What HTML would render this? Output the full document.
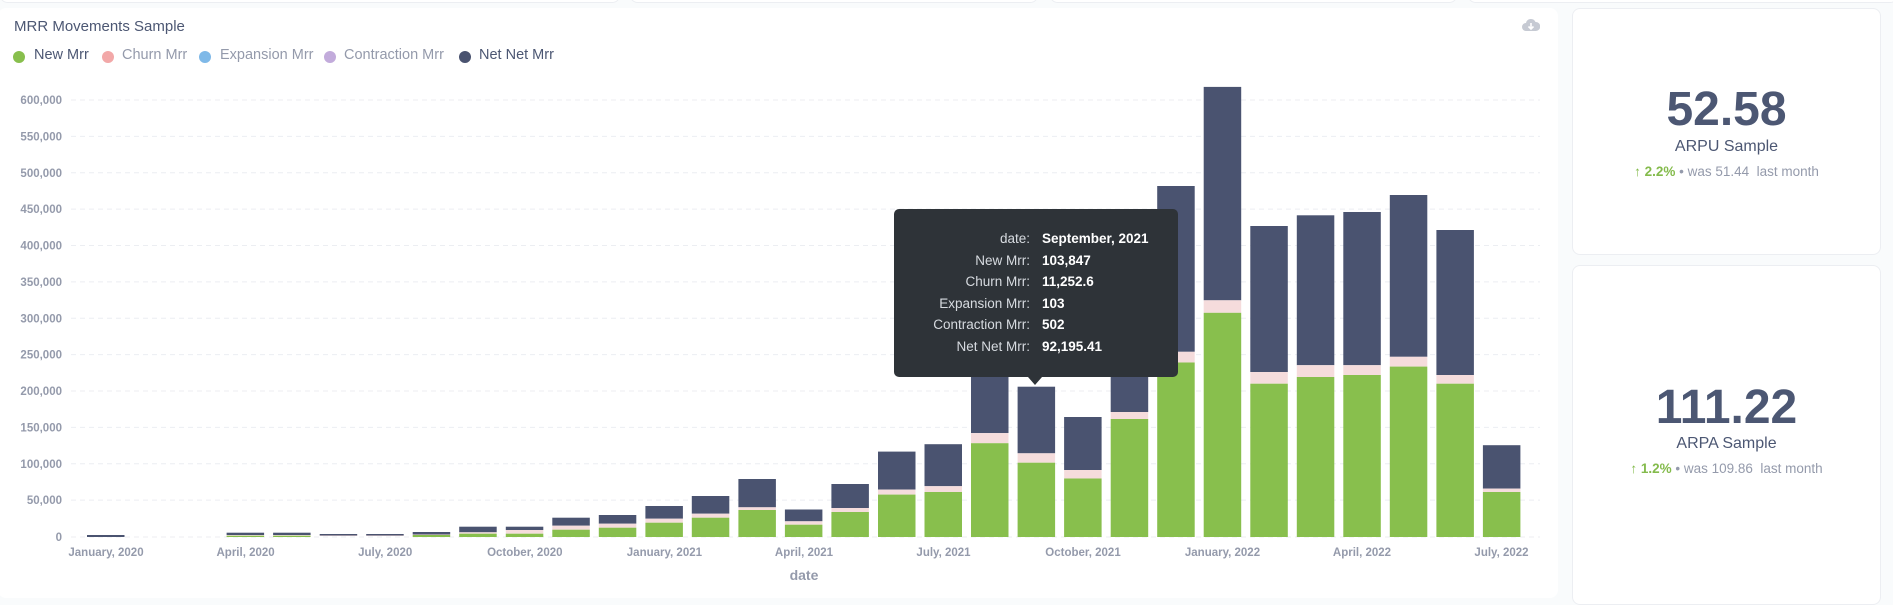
<!DOCTYPE html>
<html><head><meta charset="utf-8"><style>
body{margin:0;width:1893px;height:587px;overflow:hidden;background:#f9fbfc;font-family:"Liberation Sans",sans-serif;position:relative}
.card{position:absolute;background:#fff;border:1px solid #eceef2;border-radius:8px;box-sizing:border-box}
.t{position:absolute;white-space:nowrap}
.tip{position:absolute;left:894px;top:209px;width:284px;height:168px;background:#2e3338;border-radius:5px;color:#fff;font-size:13.5px}
.tip .r{position:absolute;left:0;width:284px;height:20px}
.tip .l{position:absolute;right:148px;color:#d7dbe0;text-align:right}
.tip .v{position:absolute;left:148px;font-weight:bold}
.big{font-weight:bold;color:#4c5773;font-size:48px;text-align:center;width:309px;left:1572px}
.sub{color:#4c5773;font-size:16px;text-align:center;width:309px;left:1572px}
.dl{font-size:13.5px;color:#949aab;text-align:center;width:309px;left:1572px}
.dl b{color:#84bb4c}
</style></head><body>
<div class="card" style="left:0;top:-12px;width:620px;height:15px"></div>
<div class="card" style="left:630px;top:-12px;width:408px;height:15px"></div>
<div class="card" style="left:1050px;top:-12px;width:407px;height:15px"></div>
<div class="card" style="left:1468px;top:-12px;width:430px;height:15px"></div>
<div class="card" style="left:-2px;top:8px;width:1560px;height:590px;border:none"></div>
<div class="card" style="left:1572px;top:8px;width:309px;height:247px"></div>
<div class="card" style="left:1572px;top:265px;width:309px;height:340px"></div>

<div class="t" style="left:14px;top:18px;font-size:15px;color:#4c5773">MRR Movements Sample</div>
<div class="t" style="left:0;top:47px;font-size:14.5px;height:20px;width:600px">
<span class="t" style="left:13px;top:4px;width:12px;height:12px;border-radius:50%;background:#88bf4d"></span><span class="t" style="left:34px;top:0;color:#4c5773">New Mrr</span>
<span class="t" style="left:102px;top:4px;width:12px;height:12px;border-radius:50%;background:#f2a8a8"></span><span class="t" style="left:122px;top:0;color:#949aab">Churn Mrr</span>
<span class="t" style="left:199px;top:4px;width:12px;height:12px;border-radius:50%;background:#7fb9e8"></span><span class="t" style="left:220px;top:0;color:#949aab">Expansion Mrr</span>
<span class="t" style="left:324px;top:4px;width:12px;height:12px;border-radius:50%;background:#c2abdb"></span><span class="t" style="left:344px;top:0;color:#949aab">Contraction Mrr</span>
<span class="t" style="left:459px;top:4px;width:12px;height:12px;border-radius:50%;background:#4a5370"></span><span class="t" style="left:479px;top:0;color:#4c5773">Net Net Mrr</span>
</div>
<svg style="position:absolute;left:1522px;top:18px" width="18" height="16" viewBox="0 0 18 16"><path d="M4 13a4 4 0 0 1 0-8 5 5 0 0 1 9.5-1A4 4 0 0 1 14 13z" fill="#c6cad3"/><path d="M9 5v6M6.5 8.5 9 11l2.5-2.5" stroke="#fff" stroke-width="1.6" fill="none"/></svg>

<svg style="position:absolute;left:0;top:0" width="1560" height="587" font-family="Liberation Sans" font-size="11.5" font-weight="bold" fill="#949aab">
<g stroke="#eceef2" stroke-dasharray="5 4">
<line x1="71" x2="1540" y1="100" y2="100"/><line x1="71" x2="1540" y1="136.4" y2="136.4"/><line x1="71" x2="1540" y1="172.8" y2="172.8"/><line x1="71" x2="1540" y1="209.1" y2="209.1"/><line x1="71" x2="1540" y1="245.5" y2="245.5"/><line x1="71" x2="1540" y1="281.9" y2="281.9"/><line x1="71" x2="1540" y1="318.3" y2="318.3"/><line x1="71" x2="1540" y1="354.6" y2="354.6"/><line x1="71" x2="1540" y1="391" y2="391"/><line x1="71" x2="1540" y1="427.4" y2="427.4"/><line x1="71" x2="1540" y1="463.8" y2="463.8"/><line x1="71" x2="1540" y1="500.1" y2="500.1"/><line x1="71" x2="1540" y1="537" y2="537"/>
</g>
<g text-anchor="end">
<text x="62" y="104">600,000</text><text x="62" y="140.4">550,000</text><text x="62" y="176.8">500,000</text><text x="62" y="213.1">450,000</text><text x="62" y="249.5">400,000</text><text x="62" y="285.9">350,000</text><text x="62" y="322.3">300,000</text><text x="62" y="358.6">250,000</text><text x="62" y="395">200,000</text><text x="62" y="431.4">150,000</text><text x="62" y="467.8">100,000</text><text x="62" y="504.1">50,000</text><text x="62" y="541">0</text>
</g>
<g id="bars">
<rect x="87" y="535" width="37.5" height="2" fill="#4a5370"/>
<g fill="#4a5370">
<rect x="226.6" y="532.7" width="37.5" height="2.3"/><rect x="273.1" y="532.7" width="37.5" height="2.3"/><rect x="319.7" y="534" width="37.5" height="1.5"/><rect x="366.2" y="534" width="37.5" height="1.5"/><rect x="412.7" y="532" width="37.5" height="2.5"/><rect x="459.2" y="526.7" width="37.5" height="5.6"/><rect x="505.8" y="526.7" width="37.5" height="3.3"/><rect x="552.3" y="517.7" width="37.5" height="8"/><rect x="598.8" y="515" width="37.5" height="8.7"/><rect x="645.4" y="506" width="37.5" height="12.7"/><rect x="691.8" y="496" width="37.5" height="17.7"/><rect x="738.4" y="479" width="37.5" height="28.3"/><rect x="784.9" y="509.5" width="37.5" height="11.8"/><rect x="831.4" y="484" width="37.5" height="24"/><rect x="878" y="451.6" width="37.5" height="38"/><rect x="924.5" y="444.2" width="37.5" height="42"/><rect x="971" y="330" width="37.5" height="103.1"/><rect x="1017.6" y="386.7" width="37.5" height="66.6"/><rect x="1064.1" y="417" width="37.5" height="53"/><rect x="1110.7" y="300" width="37.5" height="112"/><rect x="1157.2" y="186" width="37.5" height="165.8"/><rect x="1203.7" y="86.9" width="37.5" height="213.4"/><rect x="1250.3" y="226" width="37.5" height="146"/><rect x="1296.8" y="215.3" width="37.5" height="149.9"/><rect x="1343.3" y="212" width="37.5" height="153.2"/><rect x="1389.8" y="195" width="37.5" height="161.8"/><rect x="1436.4" y="230" width="37.5" height="145"/><rect x="1482.9" y="445.2" width="37.5" height="43.4"/>
</g>
<g fill="#f5dcdc">
<rect x="226.6" y="535" width="37.5" height="0.7"/><rect x="273.1" y="535" width="37.5" height="0.7"/><rect x="319.7" y="535.5" width="37.5" height="0.5"/><rect x="366.2" y="535.5" width="37.5" height="0.5"/><rect x="412.7" y="534.5" width="37.5" height="0.5"/><rect x="459.2" y="532.3" width="37.5" height="1.4"/><rect x="505.8" y="530" width="37.5" height="3.7"/><rect x="552.3" y="525.7" width="37.5" height="4"/><rect x="598.8" y="523.7" width="37.5" height="4"/><rect x="645.4" y="518.7" width="37.5" height="4"/><rect x="691.8" y="513.7" width="37.5" height="4"/><rect x="738.4" y="507.3" width="37.5" height="2.7"/><rect x="784.9" y="521.3" width="37.5" height="3.4"/><rect x="831.4" y="508" width="37.5" height="4"/><rect x="878" y="489.6" width="37.5" height="5"/><rect x="924.5" y="486.2" width="37.5" height="5.8"/><rect x="971" y="433.1" width="37.5" height="10.1"/><rect x="1017.6" y="453.3" width="37.5" height="9.4"/><rect x="1064.1" y="470" width="37.5" height="8.5"/><rect x="1110.7" y="412" width="37.5" height="7"/><rect x="1157.2" y="351.8" width="37.5" height="10.7"/><rect x="1203.7" y="300.3" width="37.5" height="12.5"/><rect x="1250.3" y="372" width="37.5" height="11.7"/><rect x="1296.8" y="365.2" width="37.5" height="11.8"/><rect x="1343.3" y="365.2" width="37.5" height="9.8"/><rect x="1389.8" y="356.8" width="37.5" height="9.8"/><rect x="1436.4" y="375" width="37.5" height="8.7"/><rect x="1482.9" y="488.6" width="37.5" height="3.4"/>
</g>
<g fill="#88bf4d">
<rect x="226.6" y="535.7" width="37.5" height="1.3"/><rect x="273.1" y="535.7" width="37.5" height="1.3"/><rect x="412.7" y="535" width="37.5" height="2"/><rect x="459.2" y="533.7" width="37.5" height="3.3"/><rect x="505.8" y="533.7" width="37.5" height="3.3"/><rect x="552.3" y="529.7" width="37.5" height="7.3"/><rect x="598.8" y="527.7" width="37.5" height="9.3"/><rect x="645.4" y="522.7" width="37.5" height="14.3"/><rect x="691.8" y="517.7" width="37.5" height="19.3"/><rect x="738.4" y="510" width="37.5" height="27"/><rect x="784.9" y="524.7" width="37.5" height="12.3"/><rect x="831.4" y="512" width="37.5" height="25"/><rect x="878" y="494.6" width="37.5" height="42.4"/><rect x="924.5" y="492" width="37.5" height="45"/><rect x="971" y="443.2" width="37.5" height="93.8"/><rect x="1017.6" y="462.7" width="37.5" height="74.3"/><rect x="1064.1" y="478.5" width="37.5" height="58.5"/><rect x="1110.7" y="419" width="37.5" height="118"/><rect x="1157.2" y="362.5" width="37.5" height="174.5"/><rect x="1203.7" y="312.8" width="37.5" height="224.2"/><rect x="1250.3" y="383.7" width="37.5" height="153.3"/><rect x="1296.8" y="377" width="37.5" height="160"/><rect x="1343.3" y="375" width="37.5" height="162"/><rect x="1389.8" y="366.6" width="37.5" height="170.4"/><rect x="1436.4" y="383.7" width="37.5" height="153.3"/><rect x="1482.9" y="492" width="37.5" height="45"/>
</g>
</g>
<g text-anchor="middle">
<text x="106" y="556">January, 2020</text><text x="245.6" y="556">April, 2020</text><text x="385.2" y="556">July, 2020</text><text x="524.8" y="556">October, 2020</text><text x="664.4" y="556">January, 2021</text><text x="804" y="556">April, 2021</text><text x="943.5" y="556">July, 2021</text><text x="1083" y="556">October, 2021</text><text x="1222.5" y="556">January, 2022</text><text x="1362" y="556">April, 2022</text><text x="1501.5" y="556">July, 2022</text>
<text x="804" y="580" font-size="14">date</text>
</g>
</svg>

<div class="tip">
<div class="r" style="top:22px"><span class="l">date:</span><span class="v">September, 2021</span></div>
<div class="r" style="top:43.5px"><span class="l">New Mrr:</span><span class="v">103,847</span></div>
<div class="r" style="top:65px"><span class="l">Churn Mrr:</span><span class="v">11,252.6</span></div>
<div class="r" style="top:86.5px"><span class="l">Expansion Mrr:</span><span class="v">103</span></div>
<div class="r" style="top:108px"><span class="l">Contraction Mrr:</span><span class="v">502</span></div>
<div class="r" style="top:129.5px"><span class="l">Net Net Mrr:</span><span class="v">92,195.41</span></div>
</div>
<div style="position:absolute;left:1028px;top:377px;width:0;height:0;border-left:7px solid transparent;border-right:7px solid transparent;border-top:8px solid #2e3338"></div>

<div class="t big" style="top:82px">52.58</div>
<div class="t sub" style="top:138px">ARPU Sample</div>
<div class="t dl" style="top:164px"><b>↑ 2.2%</b> • was 51.44 &nbsp;last month</div>
<div class="t big" style="top:380px">111.22</div>
<div class="t sub" style="top:435px">ARPA Sample</div>
<div class="t dl" style="top:461px"><b>↑ 1.2%</b> • was 109.86 &nbsp;last month</div>
</body></html>
